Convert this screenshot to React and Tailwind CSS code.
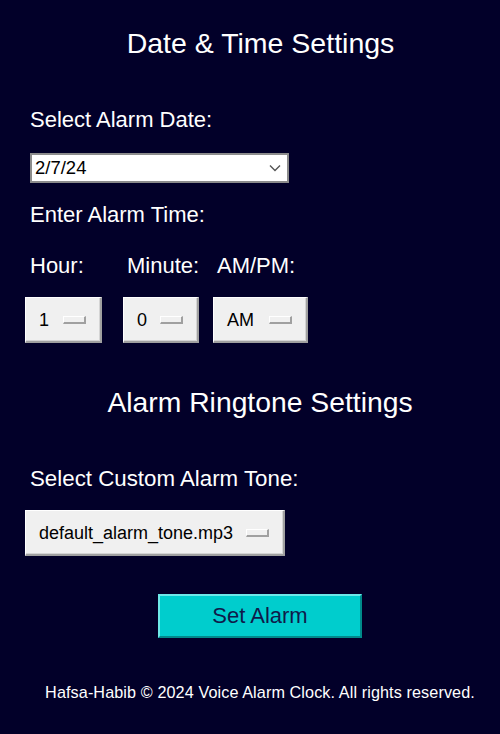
import React from 'react';

const OptionMenu = ({ value, width }) => (
    <div className={`${width} h-[46px] flex items-center justify-between pl-[13px] pr-[14px] bg-[#f0f0f0] border-t border-l border-white border-r-2 border-b-2 border-r-[#a0a0a0] border-b-[#a0a0a0] shadow-[inset_-1px_-1px_0_#d4d4d4]`}>
        <span className="text-[18px] leading-[22px] text-black">{value}</span>
        <span className="w-[23px] h-[8px] bg-[#f0f0f0] border-t border-l border-white border-r-2 border-b-2 border-r-[#a0a0a0] border-b-[#a0a0a0]" />
    </div>
);

const App = () => {
    return (
        <div className="w-[500px] h-[734px] bg-[#020029] text-white overflow-hidden flex flex-col" style={{ fontFamily: '"Liberation Sans", Arial, sans-serif' }}>
            {/* Date & Time */}
            <h1 className="mt-[27px] pl-[21px] text-center text-[28.5px] leading-[32px] font-normal">Date &amp; Time Settings</h1>

            <p className="mt-[48px] pl-[30px] text-[22px] leading-[26px]">Select Alarm Date:</p>
            <div className="mt-[20px] ml-[30px] w-[259px] h-[30px] bg-white border-2 border-[#8c8c8c] flex items-center justify-between pl-[3px] pr-[6px]">
                <span className="text-[18.5px] leading-[22px] text-black">2/7/24</span>
                <svg width="12" height="8" viewBox="0 0 12 8" className="mb-[1px]">
                    <polyline points="1,1.5 6,6.5 11,1.5" fill="none" stroke="#555" strokeWidth="1.4" />
                </svg>
            </div>

            <p className="mt-[19px] pl-[30px] text-[22px] leading-[26px]">Enter Alarm Time:</p>
            <div className="mt-[25px] flex pl-[30px] h-[26px] text-[22px] leading-[26px]">
                <span className="w-[97px]">Hour:</span>
                <span className="w-[90px]">Minute:</span>
                <span>AM/PM:</span>
            </div>
            <div className="mt-[18px] ml-[25px] flex">
                <OptionMenu value="1" width="w-[77px]" />
                <div className="ml-[21px]"><OptionMenu value="0" width="w-[76px]" /></div>
                <div className="ml-[14px]"><OptionMenu value="AM" width="w-[95px]" /></div>
            </div>

            {/* Ringtone */}
            <h2 className="mt-[43px] pl-[20px] text-center text-[28.3px] leading-[32px] font-normal">Alarm Ringtone Settings</h2>
            <p className="mt-[48px] pl-[30px] text-[22.3px] leading-[26px]">Select Custom Alarm Tone:</p>
            <div className="mt-[18px] ml-[25px]">
                <OptionMenu value="default_alarm_tone.mp3" width="w-[260px]" />
            </div>

            <div className="mt-[38px] pl-[20px] flex justify-center">
                <button className="w-[204px] h-[44px] bg-[#00cdcd] text-[#0f1a4a] text-[22px] leading-[26px] border-t-2 border-l-2 border-t-[#6ee8e8] border-l-[#6ee8e8] border-b-2 border-r-2 border-b-[#008a8a] border-r-[#008a8a]">
                    Set Alarm
                </button>
            </div>

            <p className="mt-[44px] pl-[20px] text-center text-[16.2px] leading-[20px] tracking-[0.1px]">Hafsa-Habib © 2024 Voice Alarm Clock. All rights reserved.</p>
        </div>
    );
};

export default App;
